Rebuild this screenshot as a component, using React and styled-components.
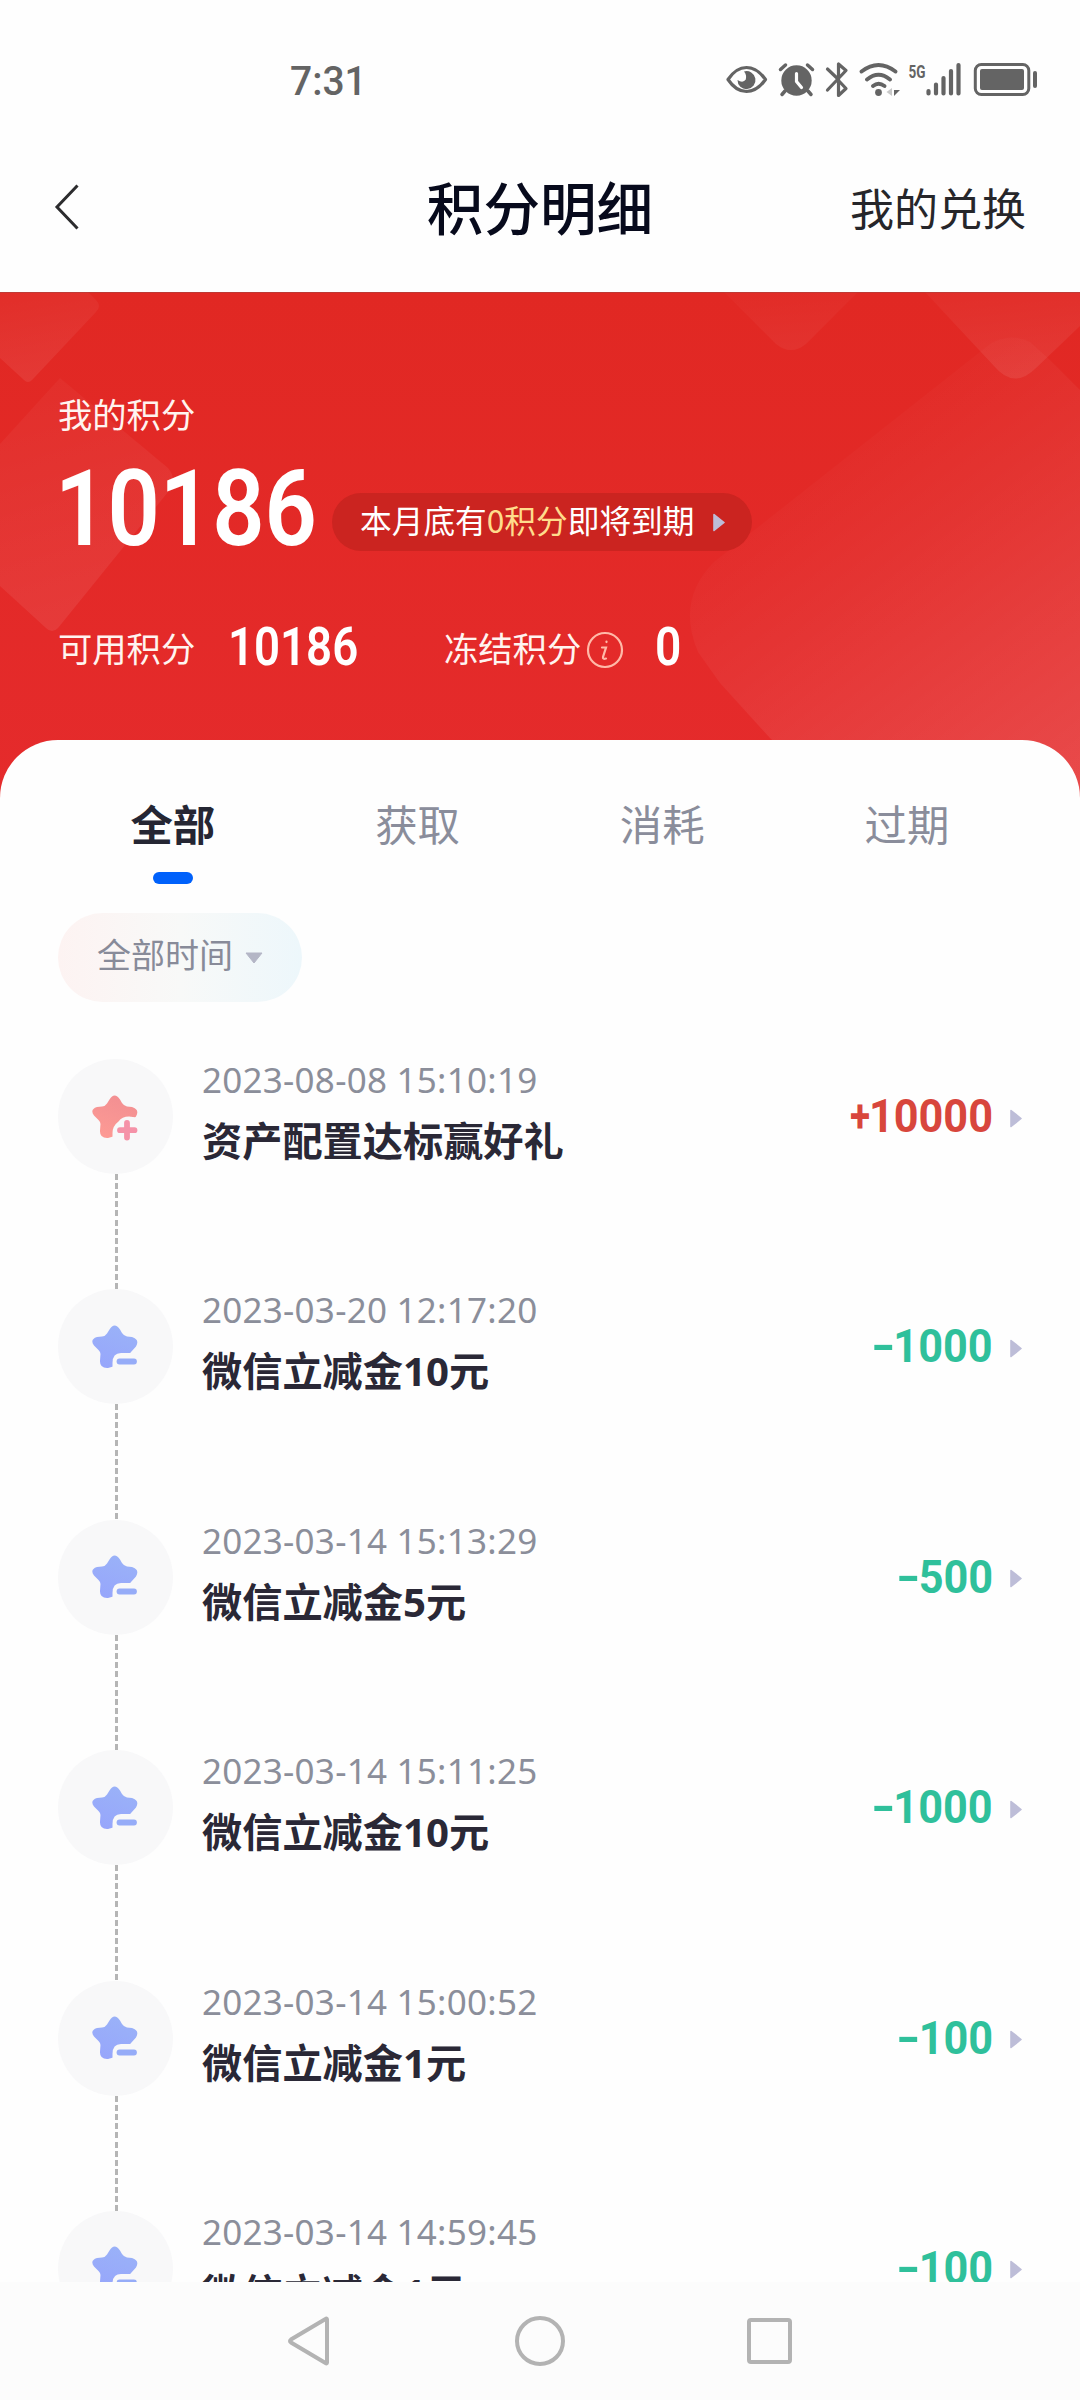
import React, {useState} from 'react'

import styled, {createGlobalStyle} from 'styled-components'


const GlobalStyle = createGlobalStyle`
* { box-sizing: border-box; }
body {
margin: 0;
background: #fefefe;
font-family: "Noto Sans CJK SC", sans-serif;
}
`

const Page = styled.div`
display: flex;
flex-direction: column;
width: 1080px;
height: 2400px;
overflow: hidden;
background: #fefefe;
`

const StatusBar = styled.div`
display: flex;
justify-content: space-between;
align-items: center;
height: 160px;
padding: 0 42px 0 290px;
color: #646464;
`

const Clock = styled.span`
padding-top: 2px;
font: 500 41px/1 Roboto, sans-serif;
transform: scaleX(.95);
transform-origin: left;
`

const TopBar = styled.div`
display: grid;
grid-template-columns: 1fr auto 1fr;
align-items: center;
height: 132px;
padding: 0 54px 38px;
`

const Title = styled.h1`
margin: -4px 0 0;
font-size: 56.6px;
line-height: 80px;
font-weight: 500;
color: #070a1c;
`

const TopLink = styled.a`
justify-self: end;
font-size: 44px;
line-height: 60px;
color: #26262a;
`

const Hero = styled.section`
position: relative;
flex: none;
height: 520px;
padding: 97px 58px 0;
background: linear-gradient(#e12823, #e52b2c);
color: #fff;
`

const HeroShapes = styled.svg`
position: absolute;
top: 0;
left: 0;
`

const HeroBody = styled.div`
position: relative;
`

const Label = styled.div`
font-size: 34.3px;
line-height: 48px;
color: #fff4f0;
`

const TotalRow = styled.div`
display: flex;
align-items: flex-start;
height: 130px;
`

// digits are set narrower than the face draws them
const Digits = styled.span`
display: block;
width: ${props => props.w}px;
font: ${props => props.weight} ${props => props.size}px/1 Roboto, sans-serif;
transform: scaleX(${props => props.squeeze});
transform-origin: left;
white-space: nowrap;
`

const TotalBox = styled.div`
margin-left: -3px;
padding-top: 19px;
`

const ExpirePill = styled.div`
display: flex;
align-items: center;
width: 420px;
height: 58px;
margin: 56px 0 0 15px;
padding: 0 27px 0 28px;
justify-content: space-between;
border-radius: 29px;
background: #cb2420;
font-size: 31.7px;
line-height: 46px;
white-space: nowrap;

span { margin-top: -7px; }

b {
font-weight: 400;
color: #ffdc8c;
}
`

const SubRow = styled.div`
display: flex;
align-items: center;
height: 52px;
margin-top: 54px;
`

const SubItem = styled.div`
display: flex;
align-items: center;
gap: 33px;
width: ${props => props.w || 'auto'};
`

const InfoIcon = styled.svg`
margin: 6px -2px 0 -28px;
`

const Sheet = styled.main`
position: relative;
display: flex;
flex-direction: column;
flex: 1;
min-height: 0;
margin-top: -72px;
padding: 40px 50px 0;
overflow: hidden;
border-radius: 58px 58px 0 0;
background: #fefefe;
`

const Tabs = styled.div`
display: grid;
grid-template-columns: repeat(4, 244.700px);
height: 104px;
flex: none;
`

const Tab = styled.button`
display: flex;
flex-direction: column;
align-items: center;
padding: 13px 0 0 1px;
border: 0;
background: none;
font: ${props => props.active ? 700 : 400} 42.4px/60px "Noto Sans CJK SC", sans-serif;
color: ${props => props.active ? '#252633' : '#8a8d9b'};

&::after {
content: "";
width: 40px;
height: 12px;
margin-top: 19px;
border-radius: 6px;
background: ${props => props.active ? '#0061fb' : 'transparent'};
}
`

const Filter = styled.button`
display: flex;
align-items: center;
gap: 12px;
flex: none;
align-self: flex-start;
width: 244px;
height: 89px;
margin: 29px 0 0 8px;
padding: 0 0 7px 39px;
border: 0;
border-radius: 45px;
background: linear-gradient(90deg, #fdf3f2, #f8f9f8 50%, #edf7fb);
font: 400 34px/48px "Noto Sans CJK SC", sans-serif;
color: #888b99;

svg { margin-top: 8px; }
`

const List = styled.div`
padding: 57px 0 0 8px;
`

const Row = styled.div`
display: flex;
height: 230.4px;
`

const Rail = styled.div`
display: flex;
flex-direction: column;
align-items: center;
width: 115px;
`

const Badge = styled.div`
display: flex;
align-items: center;
justify-content: center;
flex: none;
width: 115px;
height: 115px;
border-radius: 50%;
background: #f8f8f9;
`

const Dashes = styled.div`
width: 3px;
flex: 1;
margin-left: 1px;
background: repeating-linear-gradient(#b5b5b5 0 6px, transparent 6px 9.1px);
`

const Info = styled.div`
flex: 1;
margin: -3px 0 0 29px;
`

const Time = styled.div`
font: 400 35px/48px "Noto Sans", sans-serif;
letter-spacing: .25px;
color: #8b8e9a;
`

const Name = styled.div`
margin-top: 8px;
font: 700 40.2px/58px "Noto Sans", "Noto Sans CJK SC", sans-serif;
color: #2a2836;
`

const Amount = styled.div`
display: flex;
align-items: center;
height: 114px;
margin-right: 8px;
color: ${props => props.gain ? '#d8463c' : '#2fc09b'};
font: 700 46px/1 Roboto, sans-serif;

svg { margin: 4px 0 0 17px; }
`

const Sign = styled.span`
display: inline-block;
width: 21px;
text-align: center;
transform: scaleX(${props => props.gain ? .8 : 1.4});
`

const Value = styled.span`
margin-left: ${props => props.chars * -1.6}px;
transform: scaleX(.94);
transform-origin: right;
`

const NavBar = styled.nav`
display: flex;
justify-content: space-between;
align-items: center;
flex: none;
height: 118px;
padding: 0 286px;
background: #fcfcfc;
`

const tabs = ['全部', '获取', '消耗', '过期']

const records = [
    {time: '2023-08-08 15:10:19', name: '资产配置达标赢好礼', sign: '+', value: '10000'},
    {time: '2023-03-20 12:17:20', name: '微信立减金10元', sign: '-', value: '1000'},
    {time: '2023-03-14 15:13:29', name: '微信立减金5元', sign: '-', value: '500'},
    {time: '2023-03-14 15:11:25', name: '微信立减金10元', sign: '-', value: '1000'},
    {time: '2023-03-14 15:00:52', name: '微信立减金1元', sign: '-', value: '100'},
    {time: '2023-03-14 14:59:45', name: '微信立减金1元', sign: '-', value: '100'},
]

function StatusIcons() {
    return (
        <svg width="314" height="40" viewBox="724 60 314 40" fill="none" stroke="#646464">
            <path d="M728 79.500Q736 67.500 746.500 67.500T765.500 79.500Q757 91.500 746.500 91.500T728 79.500Z" strokeWidth="3.200" strokeLinejoin="round" />
            <path d="M744 71.500A9 9 0 1 1 737.500 80Q743 83.500 745.800 79.500Q747 75 744 71.500Z" fill="#646464" stroke="none" />

            <circle cx="796.500" cy="80.500" r="15.200" fill="#646464" stroke="none" />
            <path d="M780.500 69.500l5-4.500M812.500 69.500l-5-4.500M785 91l-3 3.500M808 91l3 3.500" strokeWidth="3.500" strokeLinecap="round" />
            <path d="M796.500 73.500v8l5 6" stroke="#fefefe" strokeWidth="3.200" strokeLinecap="round" strokeLinejoin="round" />

            <path d="M827.500 69l11 10.500M827.500 90L846 70.500L838.500 64V95.500L846 88.500L838.500 80.500" strokeWidth="3.200" strokeLinecap="round" strokeLinejoin="round" />

            <path d="M861.500 71.500Q878.500 58.500 895.500 71.500M867 79.500Q878.500 70 890 79.500M873 86Q878.500 81.500 884.500 86" strokeWidth="3.800" strokeLinecap="round" />
            <circle cx="878.500" cy="92.500" r="3.400" fill="#646464" stroke="none" />
            <path d="M892 88v8l-5.500-4z" fill="#c8c8c8" stroke="none" />
            <path d="M894 96v-6l6 0z" fill="#646464" stroke="none" />

            <text x="908.500" y="77.500" fontFamily="Roboto, sans-serif" fontWeight="700" fontSize="19" textLength="17" lengthAdjust="spacingAndGlyphs" fill="#646464" stroke="none">5G</text>

            <path d="M928.500 91v2.500M936 84.500v9M943.500 78v15.500M951 71v22.500M958.500 65v28.500" strokeWidth="4.200" strokeLinecap="round" />

            <rect x="975.300" y="64.500" width="53.500" height="30" rx="6" strokeWidth="3" />
            <rect x="980" y="69" width="44" height="21" rx="2" fill="#646464" stroke="none" />
            <path d="M1035 73v13" strokeWidth="4" strokeLinecap="round" />
        </svg>
    )
}

function Shapes() {
    return (
        <HeroShapes width="1080" height="520" viewBox="0 0 1080 520">
            <defs>
                <linearGradient id="fadeDown" x1=".3" y1="0" x2=".5" y2="1">
                    <stop offset="0" stopColor="#fff" stopOpacity=".03" />
                    <stop offset="1" stopColor="#fff" stopOpacity=".08" />
                </linearGradient>
                <linearGradient id="fadeCorner" gradientUnits="userSpaceOnUse" x1="810" y1="150" x2="1060" y2="480">
                    <stop offset="0" stopColor="#fff" stopOpacity=".01" />
                    <stop offset=".35" stopColor="#fff" stopOpacity=".05" />
                    <stop offset="1" stopColor="#fff" stopOpacity=".14" />
                </linearGradient>
            </defs>
            <path d="M0 0H88L96 8Q102 14 96 20L32 88Q28 92 24 88L0 66Z" fill="url(#fadeDown)" />
            <path d="M0 152L60 86L168 176Q178 188 168 200L58 336Q52 342 46 336L0 294Z" fill="url(#fadeDown)" />
            <path d="M724 0L776 52Q791 64 806 52L858 0Z" fill="url(#fadeDown)" opacity=".6" />
            <path d="M925 0L994 74Q1014 98 1036 76L1080 34V0Z" fill="url(#fadeDown)" />
            <path d="M1080 98L1050 68L1030 50Q1010 40 990 52L714 270Q676 308 698 360L720 391L770 446L850 520H1080Z" fill="url(#fadeCorner)" />
            <path d="M0 .5H1080" stroke="#a8443f" opacity=".6" />
        </HeroShapes>
    )
}

function Arrow({w = 12, h = 19}) {
    return (
        <svg width={w} height={h} viewBox="0 0 12 19">
            <path d="M1 1.500L11 9.500L1 17.500Z" fill="#bdbdd8" stroke="#bdbdd8" strokeWidth="1.600" strokeLinejoin="round" />
        </svg>
    )
}

function StarIcon({gain}) {
    const id = gain ? 'starRed' : 'starBlue'
    return (
        <svg width="50" height="54" viewBox="0 0 50 54">
            <defs>
                <linearGradient id={id} x1=".7" y1="0" x2=".3" y2="1">
                    <stop offset="0" stopColor={gain ? '#f28f92' : '#9ab2f8'} />
                    <stop offset="1" stopColor={gain ? '#fd9a94' : '#97a6fb'} />
                </linearGradient>
            </defs>
            <path d="M18.500 9.500Q23.500 1.500 29 9.500L31 13Q33 16 36 16.500L41 17Q49 19.500 45 26.500L40 32Q38 34 38.500 36L38 42L24 46L17 48Q8.500 48.500 9 40.500L9.500 34Q9.500 32 7.500 30L3 25.500Q-1.500 19.500 6 17L11 16.500Q14.500 16 16 13.500Z" fill={`url(#${id})`} />
            {gain ? (
                <>
                    <path d="M50 28L38 26.500Q31 26.500 27.500 31.500Q21.500 36 21.500 43V54H50Z" fill="#f8f8f9" />
                    <path d="M36 33v14.500M29 40.200h14.500" stroke="#f592a8" strokeWidth="5.800" strokeLinecap="round" />
                </>
            ) : (
                <>
                    <path d="M50 33H30Q21.500 33 21.500 43V54H50Z" fill="#f8f8f9" />
                    <path d="M28.500 41.500h14.500" stroke="#96acf8" strokeWidth="5.800" strokeLinecap="round" />
                </>
            )}
        </svg>
    )
}

export default function App() {
    let [active, setActive] = useState(0);

    return (
        <Page>
            <GlobalStyle />
            <StatusBar>
                <Clock>7:31</Clock>
                <StatusIcons />
            </StatusBar>
            <TopBar>
                <svg width="26" height="48" viewBox="0 0 26 48" fill="none" stroke="#2c2c2e" strokeWidth="3">
                    <path d="M23.500 2.500L3 24L23.500 45.500" />
                </svg>
                <Title>积分明细</Title>
                <TopLink>我的兑换</TopLink>
            </TopBar>
            <Hero>
                <Shapes />
                <HeroBody>
                    <Label>我的积分</Label>
                    <TotalRow>
                        <TotalBox>
                            <Digits w={262} size={106} weight={600} squeeze={.865}>10186</Digits>
                        </TotalBox>
                        <ExpirePill>
                            <span>本月底有<b>0积分</b>即将到期</span>
                            <Arrow />
                        </ExpirePill>
                    </TotalRow>
                    <SubRow>
                        <SubItem w="386px">
                            <Label>可用积分</Label>
                            <Digits w={140} size={53} weight={600} squeeze={.86}>10186</Digits>
                        </SubItem>
                        <SubItem>
                            <Label>冻结积分</Label>
                            <InfoIcon width="38" height="38" viewBox="0 0 38 38" fill="none" stroke="#ffb9a8" strokeWidth="2.200" strokeLinecap="round">
                                <circle cx="19" cy="19" r="17" />
                                <path d="M16 16.500h4l-3 9.500q-.5 2.500 3 1.500M20.500 10.500v.6" />
                            </InfoIcon>
                            <Digits w={30} size={53} weight={600} squeeze={.87}>0</Digits>
                        </SubItem>
                    </SubRow>
                </HeroBody>
            </Hero>
            <Sheet>
                <Tabs>
                    {tabs.map((tab, i) => (
                        <Tab key={tab} active={i === active} onClick={() => {setActive(i)}}>{tab}</Tab>
                    ))}
                </Tabs>
                <Filter>
                    全部时间
                    <svg width="18" height="12" viewBox="0 0 18 12"><path d="M1 1H17L9 11Z" fill="#b4b6c6" stroke="#b4b6c6" strokeLinejoin="round" /></svg>
                </Filter>
                <List>
                    {records.map(({time, name, sign, value}) => (
                        <Row key={time}>
                            <Rail>
                                <Badge><StarIcon gain={sign === '+'} /></Badge>
                                <Dashes />
                            </Rail>
                            <Info>
                                <Time>{time}</Time>
                                <Name>{name}</Name>
                            </Info>
                            <Amount gain={sign === '+'}>
                                <Sign gain={sign === '+'}>{sign}</Sign>
                                <Value chars={value.length}>{value}</Value>
                                <Arrow />
                            </Amount>
                        </Row>
                    ))}
                </List>
            </Sheet>
            <NavBar>
                <svg width="46" height="52" viewBox="0 0 46 52" fill="none" stroke="#b3b3b3" strokeWidth="4"><path d="M41 4.500V47.500Q41 49 39.500 48L5 27.500Q3 26 5 24.500L39.500 4Q41 3 41 4.500Z" /></svg>
                <svg width="52" height="52" viewBox="0 0 52 52" fill="none" stroke="#b3b3b3" strokeWidth="4"><circle cx="27" cy="26" r="23" /></svg>
                <svg width="48" height="52" viewBox="0 0 48 52" fill="none" stroke="#b3b3b3" strokeWidth="4"><rect x="3" y="5" width="41" height="42" rx="2" /></svg>
            </NavBar>
        </Page>
    )
}
